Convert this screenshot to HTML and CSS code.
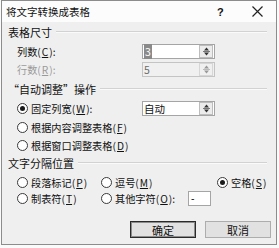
FILE: index.html
```html
<!doctype html>
<html>
<head>
<meta charset="utf-8">
<title>将文字转换成表格</title>
<link rel="stylesheet" href="styles.css">
</head>
<body>
<div class="dialog">
  <div class="titlebar">
    <span class="title">将文字转换成表格</span>
    <span class="help">?</span>
    <span class="close">
      <svg width="11" height="11" viewBox="0 0 11 11"><path d="M0.5 0.5L10.5 10.5M10.5 0.5L0.5 10.5" stroke="#222" stroke-width="1.2"/></svg>
    </span>
  </div>
  <div class="content">
    <div class="group g1"><span>表格尺寸</span><i class="rule"></i></div>
    <div class="row r1">
      <span class="label">列数(<u>C</u>):</span>
      <span class="box spin"><span class="val"><b class="sel">3</b></span><span class="arrows"><svg width="9" height="11" viewBox="0 0 9 11"><path d="M4.5 1.5L7 4.5H2z" fill="#333"/><path d="M1 5.5H8" stroke="#777"/><path d="M4.5 9.5L7 6.5H2z" fill="#333"/></svg></span></span>
    </div>
    <div class="row r2 off">
      <span class="label">行数(<u>R</u>):</span>
      <span class="box spin dis"><span class="val">5</span><span class="arrows"><svg width="9" height="11" viewBox="0 0 9 11"><path d="M4.5 1.5L7 4.5H2z" fill="#999"/><path d="M1 5.5H8" stroke="#bbb"/><path d="M4.5 9.5L7 6.5H2z" fill="#999"/></svg></span></span>
    </div>

    <div class="group g2"><span>“自动调整”操作</span><i class="rule"></i></div>
    <div class="row r3">
      <span class="label"><i class="radio on"></i>固定列宽(<u>W</u>):</span>
      <span class="box spin"><span class="val">自动</span><span class="arrows"><svg width="9" height="11" viewBox="0 0 9 11"><path d="M4.5 1.5L7 4.5H2z" fill="#333"/><path d="M1 5.5H8" stroke="#777"/><path d="M4.5 9.5L7 6.5H2z" fill="#333"/></svg></span></span>
    </div>
    <div class="row r4"><span class="label"><i class="radio"></i>根据内容调整表格(<u>F</u>)</span></div>
    <div class="row r5"><span class="label"><i class="radio"></i>根据窗口调整表格(<u>D</u>)</span></div>

    <div class="group g3"><span>文字分隔位置</span><i class="rule"></i></div>
    <div class="row r6">
      <span class="opt c1"><i class="radio"></i>段落标记(<u>P</u>)</span>
      <span class="opt c2"><i class="radio"></i>逗号(<u>M</u>)</span>
      <span class="opt c3"><i class="radio on"></i>空格(<u>S</u>)</span>
    </div>
    <div class="row r7">
      <span class="opt c1"><i class="radio"></i>制表符(<u>T</u>)</span>
      <span class="opt c2"><i class="radio"></i>其他字符(<u>O</u>):</span>
      <span class="box small">-</span>
    </div>

    <div class="buttons">
      <span class="btn default">确定</span>
      <span class="btn">取消</span>
    </div>
  </div>
</div>
</body>
</html>
```

FILE: styles.css
```css
body {
	margin: 0;
	background: #fafafa;
	font-family: "Noto Sans CJK SC", "Liberation Sans", sans-serif;
	color: #111;
}
.dialog {
	width: 274px;
	height: 243px;
	margin-left: 1px;
	border: 1px solid #8c8c8c;
	background: #efefef;
	display: flex;
	flex-direction: column;
}
.titlebar {
	height: 21px;
	background: #fcfcfc;
	display: flex;
	align-items: center;
	font-size: 10.5px;
}
.title {
	margin-left: 4px;
	flex: 1;
}
.help {
	font-family: "Liberation Sans", sans-serif;
	font-weight: bold;
	font-size: 11px;
	width: 35px;
}
.close {
	width: 24px;
	display: flex;
}
.content {
	padding: 0 5px 0 6px;
	display: flex;
	flex-direction: column;
	font-size: 10.2px;
}
.group {
	height: 16px;
	display: flex;
	align-items: center;
	font-size: 11px;
}
.rule {
	flex: 1;
	height: 0;
	border-top: 1px solid #d2d2d2;
	border-bottom: 1px solid #fafafa;
	margin: 0 4px 0 4px;
}
.g1 { margin-top: 2px; }
.g2 { margin-top: 4px; }
.g3 { margin-top: 2px; }
.row {
	height: 16px;
	display: flex;
	align-items: center;
	padding-left: 9px;
}
.r1 { margin-top: 3px; }
.r2 { margin-top: 2px; }
.r3 { margin-top: 3px; }
.r4 { margin-top: 3px; }
.r5 { margin-top: 2px; }
.r6 { margin-top: 3px; }
.r7 { margin-top: 0; }
.label {
	width: 125px;
	display: flex;
	align-items: center;
	white-space: nowrap;
}
.off .label { color: #9a9a9a; }
u { text-decoration-thickness: 1px; text-underline-offset: 1px; padding: 0 1px; }
.box {
	height: 13px;
	border: 1px solid #a5a5a5;
	background: #fff;
	display: flex;
	align-items: center;
	font-size: 10.5px;
}
.spin { width: 71px; }
.val {
	flex: 1;
	padding-left: 1px;
	line-height: 13px;
}
.sel {
	font-weight: normal;
	background: #8a8a8a;
	color: #fff;
	padding: 0 1px;
}
.arrows {
	width: 12px;
	height: 11px;
	margin-right: 1px;
	border: 1px solid #bdbdbd;
	background: #ececec;
	display: flex;
	justify-content: center;
}
.dis { background: #f0f0f0; border-color: #c4c4c4; color: #6a6a6a; }
.dis .arrows { background: #f0f0f0; border-color: #d6d6d6; }
.radio {
	width: 9px;
	height: 9px;
	border: 1px solid #3a3a3a;
	border-radius: 50%;
	background: #fff;
	margin-right: 3px;
	display: inline-flex;
	align-items: center;
	justify-content: center;
	flex: none;
}
.radio.on::after {
	content: "";
	width: 5px;
	height: 5px;
	border-radius: 50%;
	background: #1a1a1a;
}
.opt {
	display: flex;
	align-items: center;
	white-space: nowrap;
}
.c1 { width: 84px; }
.c2 { width: 116px; }
.r7 .c2 { width: 87px; }
.small {
	width: 19px;
	padding-left: 2px;
	height: 13px;
	font-family: "Liberation Sans", sans-serif;
}
.buttons {
	display: flex;
	justify-content: flex-end;
	gap: 9px;
	margin-top: 15px;
}
.btn {
	width: 64px;
	height: 15px;
	border: 1px solid #adadad;
	background: #e1e1e1;
	display: flex;
	align-items: center;
	justify-content: center;
	font-size: 11px;
}
.btn.default {
	border-color: #2a2a2a;
	box-shadow: inset 0 0 0 1px #8c8c8c;
}
```
